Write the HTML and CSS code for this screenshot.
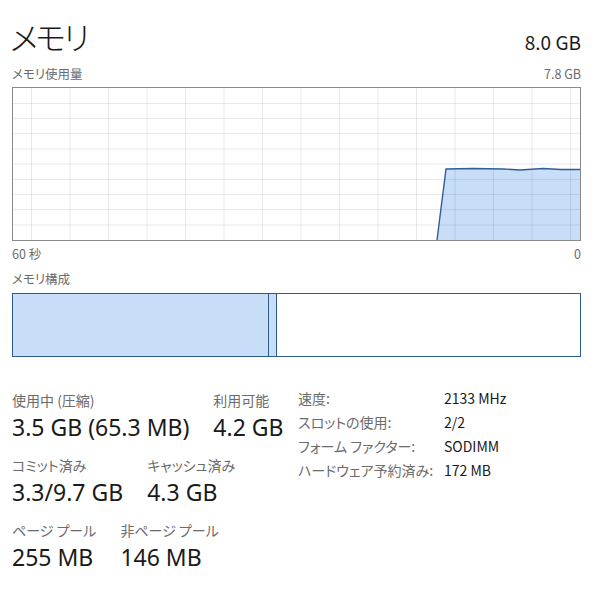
FILE: index.html
```html
<!DOCTYPE html>
<html lang="ja">
<head>
  <meta charset="UTF-8" />
  <meta name="viewport" content="width=device-width, initial-scale=1.0"/>
  <title>メモリ</title>
  <link rel="stylesheet" href="styles.css">
</head>
<body>

  <div class="page">
    <div class="head">
      <h1>メモリ</h1>
      <span class="total">8.0 GB</span>
    </div>

    <div class="caption">
      <span>メモリ使用量</span>
      <span>7.8 GB</span>
    </div>

    <!-- 使用量グラフ -->
    <div class="graph">
      <svg width="567" height="152" viewBox="0 0 567 152">
        <polygon class="fill" points="424,152 433,81 460,80.5 490,81 507,82 530,80.5 548,81.5 567,81.5 567,152"/>
        <g class="grid">
          <line x1="18.5" y1="0" x2="18.5" y2="152"/>
          <line x1="57" y1="0" x2="57" y2="152"/>
          <line x1="95.5" y1="0" x2="95.5" y2="152"/>
          <line x1="134" y1="0" x2="134" y2="152"/>
          <line x1="172.5" y1="0" x2="172.5" y2="152"/>
          <line x1="211" y1="0" x2="211" y2="152"/>
          <line x1="249.5" y1="0" x2="249.5" y2="152"/>
          <line x1="288" y1="0" x2="288" y2="152"/>
          <line x1="326.5" y1="0" x2="326.5" y2="152"/>
          <line x1="365" y1="0" x2="365" y2="152"/>
          <line x1="403.5" y1="0" x2="403.5" y2="152"/>
          <line x1="442" y1="0" x2="442" y2="152"/>
          <line x1="480.5" y1="0" x2="480.5" y2="152"/>
          <line x1="519" y1="0" x2="519" y2="152"/>
          <line x1="557.5" y1="0" x2="557.5" y2="152"/>
          <line x1="0" y1="15.5" x2="567" y2="15.5"/>
          <line x1="0" y1="30.5" x2="567" y2="30.5"/>
          <line x1="0" y1="45.5" x2="567" y2="45.5"/>
          <line x1="0" y1="61" x2="567" y2="61"/>
          <line x1="0" y1="76" x2="567" y2="76"/>
          <line x1="0" y1="91.5" x2="567" y2="91.5"/>
          <line x1="0" y1="106.5" x2="567" y2="106.5"/>
          <line x1="0" y1="121.5" x2="567" y2="121.5"/>
          <line x1="0" y1="137" x2="567" y2="137"/>
        </g>
        <polyline class="line" points="424,152 433,81 460,80.5 490,81 507,82 530,80.5 548,81.5 567,81.5"/>
      </svg>
    </div>

    <div class="caption axis">
      <span>60 秒</span>
      <span>0</span>
    </div>

    <div class="caption section">メモリ構成</div>

    <!-- メモリ構成バー -->
    <div class="compose">
      <div class="seg used"></div>
      <div class="seg modified"></div>
      <div class="seg free"></div>
    </div>

    <div class="stats">
      <div class="main">
        <div class="row">
          <div class="stat">
            <div class="label">使用中 (圧縮)</div>
            <div class="value">3.5 GB (65.3 MB)</div>
          </div>
          <div class="stat">
            <div class="label">利用可能</div>
            <div class="value">4.2 GB</div>
          </div>
        </div>
        <div class="row">
          <div class="stat">
            <div class="label">コミット済み</div>
            <div class="value">3.3/9.7 GB</div>
          </div>
          <div class="stat">
            <div class="label">キャッシュ済み</div>
            <div class="value">4.3 GB</div>
          </div>
        </div>
        <div class="row">
          <div class="stat">
            <div class="label">ページ プール</div>
            <div class="value">255 MB</div>
          </div>
          <div class="stat">
            <div class="label">非ページ プール</div>
            <div class="value">146 MB</div>
          </div>
        </div>
      </div>

      <table class="specs">
        <tr><td class="key">速度:</td><td>2133 MHz</td></tr>
        <tr><td class="key">スロットの使用:</td><td>2/2</td></tr>
        <tr><td class="key">フォーム ファクター:</td><td>SODIMM</td></tr>
        <tr><td class="key">ハードウェア予約済み:</td><td>172 MB</td></tr>
      </table>
    </div>
  </div>

</body>
</html>
```

FILE: styles.css
```css
* {
  box-sizing: border-box;
}

body {
  margin: 0;
  background: #ffffff;
  color: #1a1a1a;
  font-family: "Noto Sans CJK JP", "Noto Sans", sans-serif;
  font-feature-settings: "palt";
}

.page {
  width: 609px;
  padding: 0 28px 0 12px;
}

.head {
  height: 66px;
  padding-top: 14px;
  display: flex;
  justify-content: space-between;
  align-items: baseline;
}

h1 {
  margin: 0;
  margin-left: -2px;
  font-size: 32px;
  font-weight: 300;
  line-height: 44px;
  letter-spacing: -2.5px;
}

.total {
  font-size: 19px;
}

.caption {
  display: flex;
  justify-content: space-between;
  font-size: 12.5px;
  line-height: 16px;
  color: #6b6b6b;
}

.graph {
  margin-top: 5px;
  height: 154px;
  border: 1px solid #8a8a8a;
}

.graph svg {
  display: block;
}

.grid line {
  stroke: rgba(0, 0, 0, 0.085);
  stroke-width: 1;
}

.fill {
  fill: #c8ddf7;
}

.line {
  fill: none;
  stroke: #2f5e97;
  stroke-width: 1.4;
}

.axis {
  margin-top: 5px;
}

.section {
  margin-top: 9px;
}

.compose {
  margin-top: 6px;
  height: 64px;
  display: flex;
  border: 1px solid #2c5b8f;
}

.seg {
  height: 100%;
}

.used {
  width: 256px;
  background: #c8ddf7;
  border-right: 1px solid #2c5b8f;
}

.modified {
  width: 8px;
  background: #c8ddf7;
  border-right: 1px solid #2c5b8f;
}

.free {
  flex: 1;
}

.stats {
  margin-top: 33px;
  display: flex;
  align-items: flex-start;
}

.main {
  width: 286px;
}

.row {
  display: flex;
  gap: 24px;
  margin-bottom: 11px;
}

.label {
  font-size: 14px;
  line-height: 20px;
  color: #6b6b6b;
}

.value {
  font-size: 23px;
  line-height: 34px;
  font-family: "Noto Sans", "Noto Sans CJK JP", sans-serif;
}

.specs {
  margin-top: -4px;
  border-collapse: collapse;
  font-size: 14px;
}

.specs td {
  padding: 0;
  height: 24px;
  white-space: nowrap;
}

.specs .key {
  width: 146px;
  color: #6b6b6b;
}
```
